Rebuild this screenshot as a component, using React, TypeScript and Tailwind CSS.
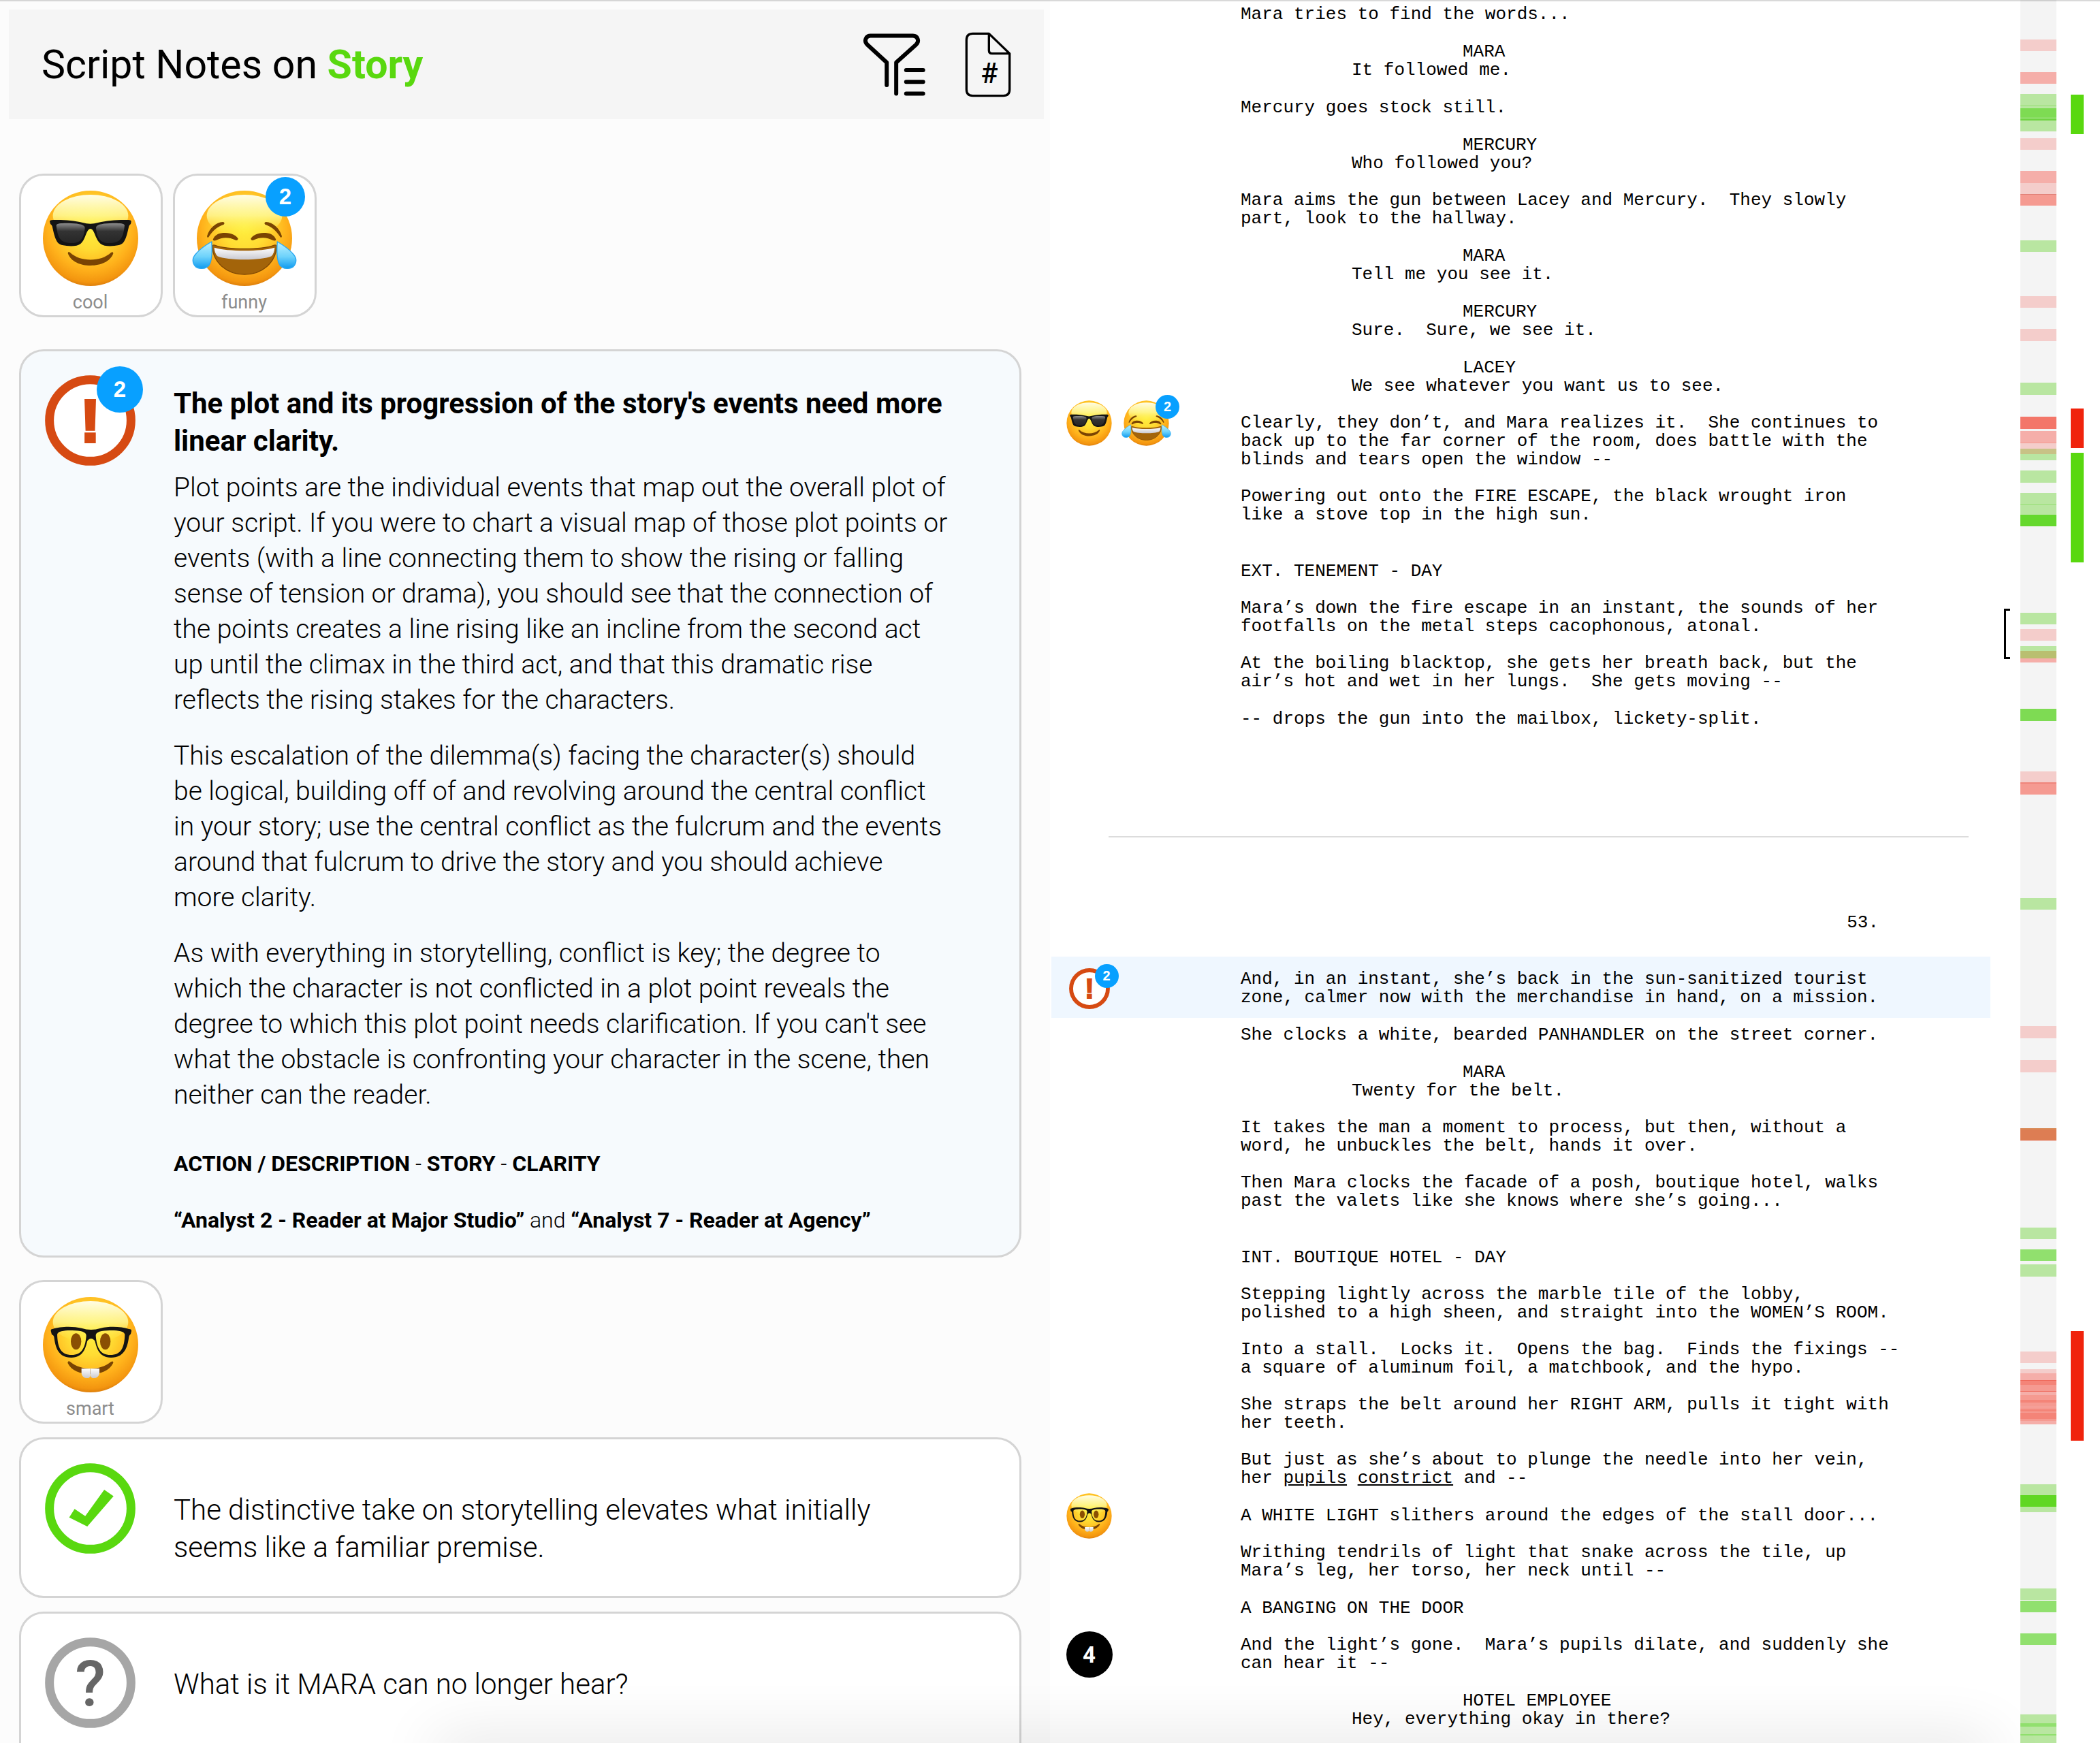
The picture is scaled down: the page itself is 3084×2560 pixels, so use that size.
import type { ReactNode } from "react";

/* ---------------------------------------------------------------------------
   Script coverage viewer: notes on the left, annotated screenplay on the
   right, heat map of every note along the far edge.
   --------------------------------------------------------------------------- */

type Face = "cool" | "funny" | "smart";

type Mark =
  | { kind: "face"; face: Face; count?: number }
  | { kind: "alert"; count?: number }
  | { kind: "total"; count: number };

type Block = {
  type: "action" | "cue" | "scene";
  lines: ReactNode[];
  marks?: Mark[];
  active?: boolean;
};

const GREEN = "#59d80f";
const RED = "#f0230c";

const pageOne: Block[] = [
  { type: "action", lines: ["Mara tries to find the words..."] },
  { type: "cue", lines: ["MARA", "It followed me."] },
  { type: "action", lines: ["Mercury goes stock still."] },
  { type: "cue", lines: ["MERCURY", "Who followed you?"] },
  {
    type: "action",
    lines: [
      "Mara aims the gun between Lacey and Mercury.  They slowly",
      "part, look to the hallway.",
    ],
  },
  { type: "cue", lines: ["MARA", "Tell me you see it."] },
  { type: "cue", lines: ["MERCURY", "Sure.  Sure, we see it."] },
  { type: "cue", lines: ["LACEY", "We see whatever you want us to see."] },
  {
    type: "action",
    lines: [
      "Clearly, they don’t, and Mara realizes it.  She continues to",
      "back up to the far corner of the room, does battle with the",
      "blinds and tears open the window --",
    ],
    marks: [
      { kind: "face", face: "cool" },
      { kind: "face", face: "funny", count: 2 },
    ],
  },
  {
    type: "action",
    lines: [
      "Powering out onto the FIRE ESCAPE, the black wrought iron",
      "like a stove top in the high sun.",
    ],
  },
  { type: "scene", lines: ["EXT. TENEMENT - DAY"] },
  {
    type: "action",
    lines: [
      "Mara’s down the fire escape in an instant, the sounds of her",
      "footfalls on the metal steps cacophonous, atonal.",
    ],
  },
  {
    type: "action",
    lines: [
      "At the boiling blacktop, she gets her breath back, but the",
      "air’s hot and wet in her lungs.  She gets moving --",
    ],
  },
  {
    type: "action",
    lines: ["-- drops the gun into the mailbox, lickety-split."],
  },
];

const pageTwo: Block[] = [
  {
    type: "action",
    lines: [
      "And, in an instant, she’s back in the sun-sanitized tourist",
      "zone, calmer now with the merchandise in hand, on a mission.",
    ],
    marks: [{ kind: "alert", count: 2 }],
    active: true,
  },
  {
    type: "action",
    lines: ["She clocks a white, bearded PANHANDLER on the street corner."],
  },
  { type: "cue", lines: ["MARA", "Twenty for the belt."] },
  {
    type: "action",
    lines: [
      "It takes the man a moment to process, but then, without a",
      "word, he unbuckles the belt, hands it over.",
    ],
  },
  {
    type: "action",
    lines: [
      "Then Mara clocks the facade of a posh, boutique hotel, walks",
      "past the valets like she knows where she’s going...",
    ],
  },
  { type: "scene", lines: ["INT. BOUTIQUE HOTEL - DAY"] },
  {
    type: "action",
    lines: [
      "Stepping lightly across the marble tile of the lobby,",
      "polished to a high sheen, and straight into the WOMEN’S ROOM.",
    ],
  },
  {
    type: "action",
    lines: [
      "Into a stall.  Locks it.  Opens the bag.  Finds the fixings --",
      "a square of aluminum foil, a matchbook, and the hypo.",
    ],
  },
  {
    type: "action",
    lines: [
      "She straps the belt around her RIGHT ARM, pulls it tight with",
      "her teeth.",
    ],
  },
  {
    type: "action",
    lines: [
      "But just as she’s about to plunge the needle into her vein,",
      <>
        her <u>pupils</u> <u>constrict</u> and --
      </>,
    ],
  },
  {
    type: "action",
    lines: ["A WHITE LIGHT slithers around the edges of the stall door..."],
    marks: [{ kind: "face", face: "smart" }],
  },
  {
    type: "action",
    lines: [
      "Writhing tendrils of light that snake across the tile, up",
      "Mara’s leg, her torso, her neck until --",
    ],
  },
  { type: "action", lines: ["A BANGING ON THE DOOR"] },
  {
    type: "action",
    lines: [
      "And the light’s gone.  Mara’s pupils dilate, and suddenly she",
      "can hear it --",
    ],
    marks: [{ kind: "total", count: 4 }],
  },
  { type: "cue", lines: ["HOTEL EMPLOYEE", "Hey, everything okay in there?"] },
];

/** Heat map bands: [top, height, colour]. Later bands paint over earlier. */
const heat: [number, number, string][] = [
  [58, 17, "#f4cdcb"],
  [106, 17, "#f5aea9"],
  [138, 55, "#b9e6a1"],
  [155, 1, "#93de70"],
  [159, 13, "#7edb53"],
  [172, 3, "#8bdd66"],
  [175, 2, "#6fd342"],
  [203, 17, "#f4cdcb"],
  [251, 18, "#f5aea9"],
  [269, 16, "#f4cdcb"],
  [285, 17, "#f59a91"],
  [285, 1, "#e08076"],
  [353, 17, "#b9e6a1"],
  [435, 17, "#f4cdcb"],
  [483, 18, "#f4cdcb"],
  [562, 18, "#b9e6a1"],
  [612, 18, "#f37669"],
  [633, 17, "#f5aea9"],
  [650, 1, "#f59a91"],
  [651, 8, "#f4cdcb"],
  [659, 8, "#c8c286"],
  [667, 9, "#b9e6a1"],
  [691, 18, "#b9e6a1"],
  [724, 32, "#b9e6a1"],
  [740, 1, "#93de70"],
  [756, 17, "#65d82d"],
  [900, 17, "#b9e6a1"],
  [924, 17, "#f4cdcb"],
  [949, 7, "#b9e6a1"],
  [956, 11, "#b9bf70"],
  [967, 6, "#f5aea9"],
  [1041, 18, "#7edb53"],
  [1133, 16, "#f4cdcb"],
  [1149, 18, "#f59a91"],
  [1149, 2, "#ef857b"],
  [1319, 17, "#b9e6a1"],
  [1507, 18, "#f4cdcb"],
  [1557, 18, "#f4cdcb"],
  [1657, 18, "#dd7d53"],
  [1657, 2, "#d98a57"],
  [1675, 1, "#f4cdcb"],
  [1803, 17, "#b9e6a1"],
  [1835, 17, "#91e06e"],
  [1857, 18, "#b9e6a1"],
  [1985, 17, "#f4cdcb"],
  [2011, 6, "#f4cdcb"],
  [2017, 75, "#f5aea9"],
  [2027, 7, "#f48478"],
  [2034, 10, "#f59a91"],
  [2027, 1, "#ee6a5c"],
  [2043, 1, "#ee6a5c"],
  [2049, 17, "#f59a91"],
  [2056, 4, "#f48478"],
  [2067, 20, "#f59a91"],
  [2070, 3, "#f48478"],
  [2075, 9, "#f48478"],
  [2180, 41, "#b9e6a1"],
  [2196, 17, "#60d723"],
  [2333, 17, "#b9e6a1"],
  [2351, 17, "#91e06e"],
  [2399, 17, "#91e06e"],
  [2518, 42, "#b9e6a1"],
  [2531, 5, "#91e06e"],
  [2547, 2, "#91e06e"],
];

const trends: [number, number, string][] = [
  [139, 58, GREEN],
  [600, 58, RED],
  [665, 161, GREEN],
  [1955, 161, RED],
];

/* ── Icons ──────────────────────────────────────────────────────────── */

/** Gradients shared by every face on the page. */
function FaceGradients() {
  return (
    <svg className="absolute h-0 w-0" aria-hidden>
      <defs>
        <radialGradient id="skin" cx="0.5" cy="0.38" r="0.66">
          <stop offset="0" stopColor="#fff03e" />
          <stop offset="0.35" stopColor="#ffdc33" />
          <stop offset="0.68" stopColor="#ffb11b" />
          <stop offset="0.88" stopColor="#f3950f" />
          <stop offset="1" stopColor="#c96a07" />
        </radialGradient>
        <linearGradient id="shine" x1="0" y1="0" x2="0" y2="1">
          <stop offset="0" stopColor="#fffde6" />
          <stop offset="0.5" stopColor="#fff894" stopOpacity="0.85" />
          <stop offset="1" stopColor="#ffee40" stopOpacity="0" />
        </linearGradient>
        <linearGradient id="lens" x1="0" y1="0" x2="0" y2="1">
          <stop offset="0" stopColor="#8d8d8d" />
          <stop offset="0.4" stopColor="#333333" />
          <stop offset="1" stopColor="#262626" />
        </linearGradient>
        <linearGradient id="teeth" x1="0" y1="0" x2="0" y2="1">
          <stop offset="0" stopColor="#ffffff" />
          <stop offset="1" stopColor="#c9c9d0" />
        </linearGradient>
        <linearGradient id="tear" x1="0" y1="0" x2="0" y2="1">
          <stop offset="0" stopColor="#bdf1ff" />
          <stop offset="0.55" stopColor="#6fd3fb" />
          <stop offset="1" stopColor="#0f9bf0" />
        </linearGradient>
      </defs>
    </svg>
  );
}

function CoolFeatures() {
  const lens =
    "M74 168 C76 158 110 158 140 159 C175 160 202 166 200 180 C196 222 184 246 142 246 C96 246 80 228 74 168 Z";
  return (
    <>
      <path
        d="M45 150 Q46 144 60 144 C110 143 150 146 190 156 Q224 166 258 156 C300 146 340 143 392 144 Q405 145 404 152 L402 162 Q397 164 394 172 C384 215 378 250 350 255 C320 261 285 262 268 248 C250 232 246 205 234 188 Q224 178 215 188 C202 205 200 232 182 248 C165 262 130 261 100 255 C72 250 66 215 56 172 Q53 165 48 162 Z"
        fill="#141414"
      />
      <path d={lens} fill="url(#lens)" />
      <path d={lens} fill="url(#lens)" transform="translate(449 0) scale(-1 1)" />
      <path
        d="M125 291 Q126 281 135 288 C180 330 270 330 315 288 Q325 282 325 292 C312 328 270 345 225 345 C180 345 138 328 125 291 Z"
        fill="#7a4403"
      />
    </>
  );
}

function FunnyHalf() {
  return (
    <>
      <path
        d="M60 216 C70 180 100 155 130 153 Q141 156 134 164 C108 172 85 190 68 218 Q62 226 60 216 Z"
        fill="#7a4403"
      />
      <path
        d="M86 230 C95 208 115 201 140 201 C168 201 188 212 197 226 Q197 236 186 233 C155 218 125 220 100 234 Q86 238 86 230 Z"
        fill="#7a4403"
      />
    </>
  );
}

function Tear() {
  return (
    <path
      d="M80 240 C84 290 82 322 70 342 C56 362 20 364 6 346 C-8 326 -2 306 14 290 C38 264 60 252 80 240 Z"
      fill="url(#tear)"
      stroke="#2aa9f2"
      strokeWidth="4"
    />
  );
}

function FunnyFeatures() {
  return (
    <>
      <FunnyHalf />
      <g transform="translate(450 0) scale(-1 1)">
        <FunnyHalf />
      </g>
      <path
        d="M84 262 Q84 252 96 256 C150 276 300 276 354 256 Q366 252 366 262 C364 330 305 384 225 384 C145 384 86 330 84 262 Z"
        fill="#a3640a"
        stroke="#7f4804"
        strokeWidth="4"
      />
      <path
        d="M92 266 C150 284 300 284 358 266 Q356 292 344 304 C300 324 150 324 106 304 Q94 292 92 266 Z"
        fill="url(#teeth)"
      />
      <Tear />
      <g transform="translate(450 0) scale(-1 1)">
        <Tear />
      </g>
    </>
  );
}

function SmartFeatures() {
  return (
    <>
      <ellipse cx="161" cy="211" rx="23" ry="36" fill="#8a4f03" />
      <ellipse cx="290" cy="211" rx="23" ry="36" fill="#8a4f03" />
      <path
        fillRule="evenodd"
        d="M50 164 Q49 155 60 155 C90 144 150 143 185 152 Q227 166 270 152 C310 143 360 145 394 156 Q407 156 405 166 L402 178 Q396 182 394 190 C388 240 372 282 315 282 C262 282 252 240 244 208 Q227 188 211 208 C203 240 193 282 140 282 C84 282 70 240 64 190 Q62 182 54 180 Z M78 180 C80 164 115 161 145 162 C180 163 208 168 206 186 C202 240 185 270 142 270 C95 270 80 240 78 180 Z M376 180 C374 164 339 161 309 162 C274 163 246 168 248 186 C252 240 269 270 312 270 C359 270 374 240 376 180 Z"
        fill="#141414"
      />
      <path
        d="M124 305 Q126 293 136 301 C180 340 270 340 314 301 Q326 294 325 305 C308 340 270 354 225 354 C180 354 140 340 124 305 Z"
        fill="#7a4403"
      />
      <path
        d="M185 330 H224 V362 Q222 372 210 372 Q188 372 185 350 Z"
        fill="url(#teeth)"
      />
      <path
        d="M264 330 H225 V362 Q227 372 239 372 Q261 372 264 350 Z"
        fill="url(#teeth)"
      />
    </>
  );
}

function FaceIcon({ face, className }: { face: Face; className: string }) {
  return (
    <svg
      viewBox="0 0 450 450"
      className={`shrink-0 overflow-visible ${className}`}
      role="img"
      aria-label={face}
    >
      <circle cx="225" cy="225" r="210" fill="url(#skin)" />
      <ellipse cx="225" cy="125" rx="166" ry="92" fill="url(#shine)" />
      {face === "cool" && <CoolFeatures />}
      {face === "funny" && <FunnyFeatures />}
      {face === "smart" && <SmartFeatures />}
    </svg>
  );
}

function Ring({
  color,
  className,
  children,
}: {
  color: string;
  className: string;
  children: ReactNode;
}) {
  return (
    <svg viewBox="0 0 400 400" className={`shrink-0 ${className}`} aria-hidden>
      <circle cx="200" cy="200" r="180" fill="#fff" stroke={color} strokeWidth="39" />
      {children}
    </svg>
  );
}

function AlertIcon({ className }: { className: string }) {
  return (
    <Ring color="#d64a12" className={className}>
      <text
        x="200"
        y="294"
        textAnchor="middle"
        fill="#d64a12"
        stroke="#d64a12"
        strokeWidth="12"
        fontSize="268"
        fontWeight="700"
        fontFamily="Liberation Sans, sans-serif"
      >
        !
      </text>
    </Ring>
  );
}

function CheckIcon({ className }: { className: string }) {
  return (
    <Ring color={GREEN} className={className}>
      <path d="M131 202 L178 234 L262 117 L303 146 L187 280 L107 240 Z" fill={GREEN} />
    </Ring>
  );
}

function QuestionIcon({ className }: { className: string }) {
  return (
    <Ring color="#a6a6a6" className={className}>
      <text
        x="200"
        y="300"
        textAnchor="middle"
        fill="#666"
        fontSize="276"
        fontWeight="500"
        fontFamily="Roboto, sans-serif"
      >
        ?
      </text>
    </Ring>
  );
}

function FilterIcon() {
  return (
    <svg
      viewBox="50 78 280 282"
      className="h-[94px] w-[93px]"
      fill="none"
      stroke="#000"
      strokeWidth="18"
      strokeLinecap="round"
      strokeLinejoin="round"
      aria-hidden
    >
      <path d="M156 309 V209 L70 130 C54 114 64 91 84 91 H272 C292 91 302 114 286 130 L198 209 V347" />
      <path d="M242 243 H317 M242 295 H317 M242 347 H317" />
    </svg>
  );
}

function PageNumberIcon() {
  return (
    <svg
      viewBox="503 78 204 294"
      className="h-[98px] w-[68px]"
      fill="none"
      stroke="#000"
      strokeWidth="10"
      strokeLinejoin="round"
      aria-hidden
    >
      <path d="M609 88 H538 Q510 88 510 116 V334 Q510 362 538 362 H672 Q700 362 700 334 V176 Z" />
      <path d="M609 88 V162 Q609 176 623 176 H700" />
      <text
        x="611"
        y="306"
        textAnchor="middle"
        fill="#000"
        stroke="none"
        fontSize="125"
        fontWeight="500"
        fontFamily="Roboto, sans-serif"
      >
        #
      </text>
    </svg>
  );
}

/* ── Notes ──────────────────────────────────────────────────────────── */

function FaceCard({ face, count }: { face: Face; count?: number }) {
  return (
    <button
      type="button"
      className="relative flex h-[211px] w-[211px] flex-col items-center rounded-[36px] border-3 border-[#d4d4d4] bg-white pr-0.5 pt-[17px]"
    >
      <FaceIcon face={face} className="h-[150px] w-[150px]" />
      <span className="mt-[3px] text-[27px] leading-[32px] text-[#8c8c8c]">
        {face}
      </span>
      {count && (
        <span className="absolute right-[14px] top-0.5 flex h-[58px] w-[58px] items-center justify-center rounded-full bg-[#08a0ff] font-['Liberation_Sans',sans-serif] text-[33px] font-bold text-white">
          {count}
        </span>
      )}
    </button>
  );
}

function NoteCard({
  icon,
  count,
  className,
  children,
}: {
  icon: ReactNode;
  count?: number;
  className: string;
  children: ReactNode;
}) {
  return (
    <article
      className={`flex min-h-[236px] gap-14 rounded-[36px] border-3 border-[#d4d4d4] pl-[35px] pr-[96px] ${className}`}
    >
      <div className="relative shrink-0 self-start pt-[35px]">
        {icon}
        {count && (
          <span className="absolute -right-[11px] top-[22px] flex h-[68px] w-[68px] items-center justify-center rounded-full bg-[#08a0ff] font-['Liberation_Sans',sans-serif] text-[33px] font-bold text-white">
            {count}
          </span>
        )}
      </div>
      <div className="min-w-0 max-w-[1138px]">{children}</div>
    </article>
  );
}

function Notes() {
  return (
    <section className="w-1/2 bg-[#fcfcfc] font-[Roboto,sans-serif]">
      <header className="ml-[13px] mr-[9px] mt-[14px] flex h-[161px] items-center justify-between bg-[#f5f5f5] pl-12 pr-12">
        <h1 className="text-[59px] leading-[68px]">
          Script Notes on <strong className="font-bold text-[#59d80f]">Story</strong>
        </h1>
        <div className="flex items-center gap-[57px]">
          <button type="button" aria-label="Filter notes">
            <FilterIcon />
          </button>
          <button type="button" aria-label="Jump to page">
            <PageNumberIcon />
          </button>
        </div>
      </header>

      <div className="pl-7 pr-[42px] pt-20">
        <div className="flex gap-[15px]">
          <FaceCard face="cool" />
          <FaceCard face="funny" count={2} />
        </div>

        <NoteCard
          icon={<AlertIcon className="h-[133px] w-[133px]" />}
          count={2}
          className="mt-[47px] bg-[#f6fafd] pb-8"
        >
          <h2 className="pt-[49px] text-[42px] font-bold leading-[55px]">
            The plot and its progression of the story's events need more linear
            clarity.
          </h2>
          <div className="mt-[15px] space-y-[30px] text-[39px] font-light leading-[52px]">
            <p>
              Plot points are the individual events that map out the overall
              plot of your script. If you were to chart a visual map of those
              plot points or events (with a line connecting them to show the
              rising or falling sense of tension or drama), you should see that
              the connection of the points creates a line rising like an incline
              from the second act up until the climax in the third act, and that
              this dramatic rise reflects the rising stakes for the characters.
            </p>
            <p>
              This escalation of the dilemma(s) facing the character(s) should
              be logical, building off of and revolving around the central
              conflict in your story; use the central conflict as the fulcrum
              and the events around that fulcrum to drive the story and you
              should achieve more clarity.
            </p>
            <p>
              As with everything in storytelling, conflict is key; the degree to
              which the character is not conflicted in a plot point reveals the
              degree to which this plot point needs clarification. If you can't
              see what the obstacle is confronting your character in the scene,
              then neither can the reader.
            </p>
          </div>
          <p className="mt-14 text-[32px] font-light leading-[39px]">
            <b className="font-bold">ACTION / DESCRIPTION</b> -{" "}
            <b className="font-bold">STORY</b> -{" "}
            <b className="font-bold">CLARITY</b>
          </p>
          <p className="mt-11 text-[32px] font-light leading-[39px]">
            <b className="font-bold">“Analyst 2 - Reader at Major Studio”</b> and{" "}
            <b className="font-bold">“Analyst 7 - Reader at Agency”</b>
          </p>
        </NoteCard>

        <div className="mt-[33px] flex">
          <FaceCard face="smart" />
        </div>

        <NoteCard
          icon={<CheckIcon className="h-[133px] w-[133px]" />}
          className="mt-5 bg-white"
        >
          <p className="pt-[76px] text-[42px] font-light leading-[55px]">
            The distinctive take on storytelling elevates what initially seems
            like a familiar premise.
          </p>
        </NoteCard>

        <NoteCard
          icon={<QuestionIcon className="h-[133px] w-[133px]" />}
          className="mt-5 bg-white"
        >
          <p className="pt-[76px] text-[42px] font-light leading-[55px]">
            What is it MARA can no longer hear?
          </p>
        </NoteCard>
      </div>
    </section>
  );
}

/* ── Screenplay ─────────────────────────────────────────────────────── */

function GutterMark({ mark }: { mark: Mark }) {
  return (
    <button
      type="button"
      className="flex h-[71px] w-[71px] shrink-0 items-center justify-center"
    >
      {mark.kind === "total" ? (
        <span className="flex h-[68px] w-[68px] items-center justify-center rounded-full bg-black font-[Roboto,sans-serif] text-[33px] font-bold text-white">
          {mark.count}
        </span>
      ) : (
        <span className="relative">
          {mark.kind === "face" ? (
            <FaceIcon face={mark.face} className="h-[71px] w-[71px]" />
          ) : (
            <AlertIcon className="h-[60px] w-[60px]" />
          )}
          {mark.count && (
            <span className="absolute -right-[13px] -top-[6px] flex h-[35px] w-[35px] items-center justify-center rounded-full bg-[#08a0ff] font-['Liberation_Sans',sans-serif] text-[20px] font-bold text-white">
              {mark.count}
            </span>
          )}
        </span>
      )}
    </button>
  );
}

function ScriptBlock({ block }: { block: Block }) {
  const spacing = block.active
    ? "-mb-4 bg-[#eff7ff] pb-4 pt-5"
    : block.type === "scene"
      ? "mt-14"
      : block.type === "cue" || block.lines.length === 1
        ? "mt-7 first:mt-0"
        : "mt-[27px]";

  return (
    <div className={`flex ${spacing}`}>
      <div
        className={`flex h-[27px] w-[278px] shrink-0 items-center gap-[13px] pl-5 ${
          block.lines.length === 2 ? "self-center" : ""
        }`}
      >
        {block.marks?.map((mark, i) => (
          <GutterMark key={i} mark={mark} />
        ))}
      </div>
      <div className="whitespace-pre">
        {block.lines.map((line, i) => (
          <p
            key={i}
            className={
              block.type === "cue" ? (i === 0 ? "pl-[326px]" : "pl-[163px]") : ""
            }
          >
            {line}
          </p>
        ))}
      </div>
    </div>
  );
}

function Screenplay() {
  return (
    <main className="ml-0.5 min-w-0 flex-1 pt-2 font-['Liberation_Mono',monospace] text-[26px] leading-[27px]">
      <div>
        {pageOne.map((block, i) => (
          <ScriptBlock key={i} block={block} />
        ))}
      </div>
      <hr className="ml-[84px] mr-8 mt-[158px] border-t-2 border-[#dcdcdc]" />
      <p className="mt-28 pr-[164px] text-right">53.</p>
      <div className="mt-9">
        {pageTwo.map((block, i) => (
          <ScriptBlock key={i} block={block} />
        ))}
      </div>
    </main>
  );
}

function HeatMap() {
  return (
    <aside className="ml-5 flex pr-6" aria-label="Note density">
      {/* Bracket around the part of the script in view. */}
      <div className="mt-[894px] h-[74px] w-[9px] border-y-3 border-l-3 border-black" />
      <div className="relative ml-[15px] w-[53px] bg-[#f4f4f4]">
        {heat.map(([top, height, color], i) => (
          <span
            key={i}
            className="absolute inset-x-0"
            style={{ top, height, background: color }}
          />
        ))}
      </div>
      <div className="relative ml-[21px] w-[19px]">
        {trends.map(([top, height, color]) => (
          <span
            key={top}
            className="absolute inset-x-0"
            style={{ top, height, background: color }}
          />
        ))}
      </div>
    </aside>
  );
}

export default function App() {
  return (
    <div className="relative flex h-screen overflow-hidden bg-white text-black">
      <FaceGradients />
      <Notes />
      <div className="flex w-1/2">
        <Screenplay />
        <HeatMap />
      </div>
      <div className="absolute inset-x-0 top-0 h-0.5 bg-black/15" />
      <div className="pointer-events-none absolute left-[640px] right-[160px] top-full h-10 shadow-[0_0_90px_rgba(0,0,0,0.16)]" />
    </div>
  );
}
